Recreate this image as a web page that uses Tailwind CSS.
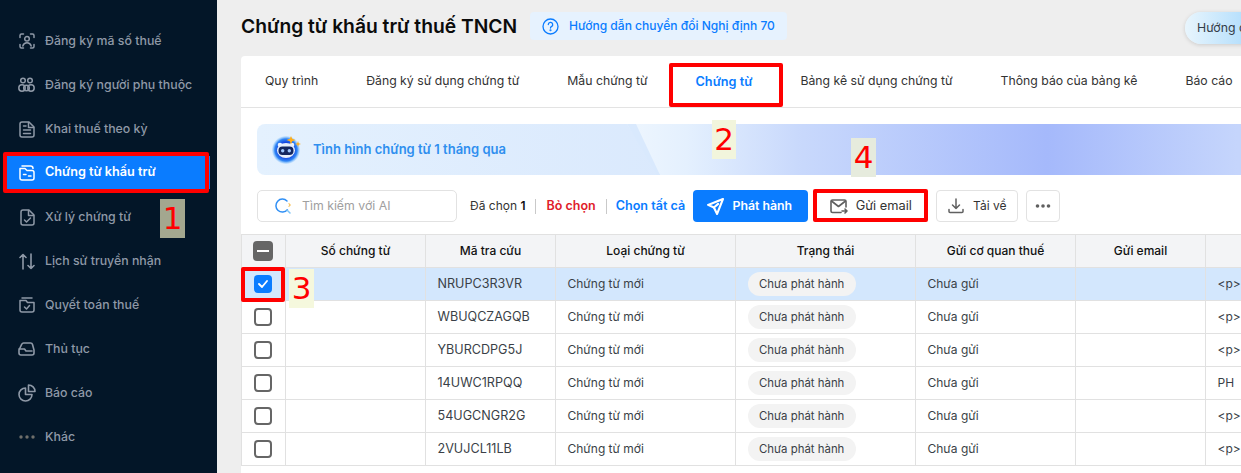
<!DOCTYPE html>
<html lang="vi">
<head>
<meta charset="UTF-8">
<meta name="viewport" content="width=device-width, initial-scale=1.0">
<title>Chứng từ khấu trừ thuế TNCN</title>
<script src="https://cdn.jsdelivr.net/npm/@tailwindcss/browser@4"></script>
</head>
<body class="w-[1241px] h-[473px] overflow-hidden relative bg-[#eeeeee] font-['Inter',sans-serif]">
<div class="flex h-[473px]">

  <!-- sidebar -->
  <aside class="w-[217px] shrink-0 bg-[#031628] pt-[19px] px-[7px] text-[12.35px] font-medium text-[#8f99a7]">
    <nav class="flex flex-col">
      <a class="h-[44px] flex items-center gap-[10px] pl-[12px]">
        <svg class="w-[16px] h-[16px]" viewBox="0 0 16 16" fill="none" stroke="currentColor" stroke-width="1.500" stroke-linecap="round" stroke-linejoin="round"><path d="M1 4.500V2.500A1.500 1.500 0 0 1 2.500 1H4.500M11.500 1H13.500A1.500 1.500 0 0 1 15 2.500V4.500M15 11.500V13.500A1.500 1.500 0 0 1 13.500 15H11.500M4.500 15H2.500A1.500 1.500 0 0 1 1 13.500V11.500"/><circle cx="8" cy="5.800" r="2.300"/><path d="M3.800 13C4.500 10.800 6 9.800 8 9.800S11.500 10.800 12.200 13"/></svg>
        <span>Đăng ký mã số thuế</span>
      </a>
      <a class="h-[44px] flex items-center gap-[10px] pl-[11px]">
        <svg class="w-[17px] h-[16px]" viewBox="0 0 17 16" fill="none" stroke="currentColor" stroke-width="1.500"><circle cx="5" cy="3.500" r="2.300"/><circle cx="12" cy="3.500" r="2.300"/><circle cx="4" cy="11" r="3.200"/><circle cx="13" cy="11" r="3.200"/><circle cx="8.500" cy="11" r="2.800"/></svg>
        <span>Đăng ký người phụ thuộc</span>
      </a>
      <a class="h-[44px] flex items-center gap-[10px] pl-[12px]">
        <svg class="w-[16px] h-[17px]" viewBox="0 0 16 17" fill="none" stroke="currentColor" stroke-width="1.500" stroke-linecap="round" stroke-linejoin="round"><path d="M3 1H10L15 6V14A2 2 0 0 1 13 16H3A2 2 0 0 1 1 14V3A2 2 0 0 1 3 1Z"/><path d="M9.500 1.500V6.500H14.500M4.500 5H7M4.500 9H11.500M4.500 12.500H11.500"/></svg>
        <span>Khai thuế theo kỳ</span>
      </a>
      <a class="h-[33px] mt-[5px] mb-[6px] flex items-center gap-[10px] pl-[12px] bg-[#0a7cff] text-white font-semibold text-[12.65px]">
        <svg class="w-[16px] h-[16px]" viewBox="0 0 16 16" fill="none" stroke="currentColor" stroke-width="1.500" stroke-linecap="round" stroke-linejoin="round"><path d="M3 1H11.500C13 1 14 2 14 3.500"/><path d="M1 3.500V13A2 2 0 0 0 3 15H13A2 2 0 0 0 15 13V7.500A2 2 0 0 0 13 5.500H8L6 3.500H1Z"/><path d="M4.500 9.500H7M9.500 11H12"/></svg>
        <span>Chứng từ khấu trừ</span>
      </a>
      <a class="h-[44px] flex items-center gap-[10px] pl-[13px]">
        <svg class="w-[15px] h-[17px]" viewBox="0 0 15 17" fill="none" stroke="currentColor" stroke-width="1.500" stroke-linecap="round" stroke-linejoin="round"><path d="M3 1H9L14 6V14A2 2 0 0 1 12 16H3A2 2 0 0 1 1 14V3A2 2 0 0 1 3 1Z"/><path d="M8.500 1.500V6.500H13.500M4.500 11L6.500 13L10.500 9"/></svg>
        <span>Xử lý chứng từ</span>
      </a>
      <a class="h-[44px] flex items-center gap-[10px] pl-[12px]">
        <svg class="w-[16px] h-[17px]" viewBox="0 0 16 17" fill="none" stroke="currentColor" stroke-width="1.600" stroke-linecap="round" stroke-linejoin="round"><path d="M4 16V1.500M1 4.500L4 1.500L7 4.500M12 1V15.500M9 12.500L12 15.500L15 12.500"/></svg>
        <span>Lịch sử truyền nhận</span>
      </a>
      <a class="h-[44px] flex items-center gap-[10px] pl-[12px]">
        <svg class="w-[16px] h-[16px]" viewBox="0 0 16 16" fill="none" stroke="currentColor" stroke-width="1.500" stroke-linecap="round" stroke-linejoin="round"><path d="M3 1H13"/><path d="M1 3.500H7L8.500 5.500H15V13A2 2 0 0 1 13 15H3A2 2 0 0 1 1 13V3.500Z"/><path d="M5.500 10L7.500 12L10.500 8.500"/></svg>
        <span>Quyết toán thuế</span>
      </a>
      <a class="h-[44px] flex items-center gap-[10px] pl-[11px]">
        <svg class="w-[17px] h-[14px]" viewBox="0 0 17 14" fill="none" stroke="currentColor" stroke-width="1.600" stroke-linecap="round" stroke-linejoin="round"><path d="M1 8L3.800 2.200A2 2 0 0 1 5.600 1H12.500A2 2 0 0 1 14.500 2.500L16 8V11A2 2 0 0 1 14 13H3A2 2 0 0 1 1 11V8Z"/><path d="M1 7H6.500L8 9H14"/></svg>
        <span>Thủ tục</span>
      </a>
      <a class="h-[44px] flex items-center gap-[9px] pl-[11px]">
        <svg class="w-[18px] h-[18px]" viewBox="0 0 18 18" fill="none" stroke="currentColor" stroke-width="1.600" stroke-linecap="round" stroke-linejoin="round"><path d="M7.500 4A6.500 6.500 0 1 0 14 10.500H7.500V4Z"/><path d="M10.500 1A6.500 6.500 0 0 1 17 7.500H10.500V1Z"/></svg>
        <span>Báo cáo</span>
      </a>
      <a class="h-[44px] flex items-center gap-[10px] pl-[12px]">
        <svg class="w-[16px] h-[4px]" viewBox="0 0 16 4" fill="#6f6f6b"><circle cx="2" cy="2" r="1.700"/><circle cx="8" cy="2" r="1.700"/><circle cx="14" cy="2" r="1.700"/></svg>
        <span>Khác</span>
      </a>
    </nav>
  </aside>

  <!-- main -->
  <main class="flex-1 min-w-0 pl-[24px] overflow-hidden">
    <header class="h-[56px] flex items-center relative">
      <h1 class="text-[19.25px] leading-[26px] font-semibold text-[#0b0b0b] -mt-[4px]">Chứng từ khấu trừ thuế TNCN</h1>
      <a class="ml-[13px] -mt-[4px] h-[28px] w-[257px] pl-[12px] flex items-center gap-[10px] rounded-[4px] bg-[#e6f2fe] text-[12.05px] font-medium text-[#0a7cff] whitespace-nowrap">
        <svg class="w-[17px] h-[17px]" viewBox="0 0 17 17" fill="none" stroke="currentColor" stroke-width="1.300" stroke-linecap="round"><circle cx="8.500" cy="8.500" r="7.500"/><path d="M6.300 6.600A2.200 2.200 0 1 1 9.400 8.600C8.800 8.900 8.500 9.300 8.500 10"/><circle cx="8.500" cy="12.300" r=".4" fill="currentColor"/></svg>
        <span>Hướng dẫn chuyển đổi Nghị định 70</span>
      </a>
      <div class="absolute left-[944px] top-[12px] w-[200px] h-[32px] rounded-full bg-[linear-gradient(90deg,#e8f5fd_0px,#b8e0fc_56px)] shadow-[0_1px_4px_rgba(0,0,0,0.15)] pl-[12px] flex items-center text-[12.3px] text-[#333c48] whitespace-nowrap">Hướng dẫn</div>
    </header>

    <section class="w-[1100px] h-[417px] bg-white rounded-t-[4px]">
      <!-- tabs -->
      <div class="h-[52px] flex items-center border-b border-[#e3e3e3] text-[12.25px] text-[#333333] whitespace-nowrap">
        <a class="px-[24px]">Quy trình</a>
        <a class="px-[24px]">Đăng ký sử dụng chứng từ</a>
        <a class="px-[24px]">Mẫu chứng từ</a>
        <a class="px-[24px] font-semibold text-[#0a7cff] text-[12.7px]">Chứng từ</a>
        <a class="px-[24px]">Bảng kê sử dụng chứng từ</a>
        <a class="px-[24px]">Thông báo của bảng kê</a>
        <a class="px-[24px]">Báo cáo</a>
      </div>

      <!-- banner -->
      <div class="mt-[16px] ml-[16px] h-[51px] rounded-l-[8px] relative overflow-hidden bg-[linear-gradient(90deg,#e4f1fe_0%,#cadcfb_100%)] flex items-center">
        <div class="absolute left-[370px] top-0 w-[614px] h-full bg-[linear-gradient(90deg,#eef6fe_0px,#e4f0fe_60px,#c9d9fc_170px,#a5b9fb_420px,#c5d5fc_610px)] [clip-path:polygon(0_0,100%_0,100%_100%,33px_100%)]"></div>
        <div class="absolute left-[370px] top-0 w-[40px] h-full bg-[#d9e9fd] [clip-path:polygon(0_0,9px_0,33px_100%,30px_100%)]"></div>
        <svg class="relative ml-[15px] w-[30px] h-[30px]" viewBox="0 0 30 30">
          <defs><radialGradient id="orb"><stop offset="0.55" stop-color="#1546e0"/><stop offset="0.8" stop-color="#2f86f5"/><stop offset="1" stop-color="#7fc0fb" stop-opacity="0.2"/></radialGradient></defs>
          <circle cx="14" cy="15" r="14" fill="url(#orb)"/>
          <circle cx="8" cy="10" r="2.300" fill="#eef4ff"/>
          <circle cx="20" cy="10" r="2.300" fill="#eef4ff"/>
          <ellipse cx="14" cy="15.500" rx="9" ry="7.500" fill="#e6eefc"/>
          <rect x="6.500" y="11.500" width="15" height="8.500" rx="4" fill="#14265f"/>
          <circle cx="10.700" cy="15.800" r="1.700" fill="#9ec7ff"/>
          <circle cx="17.300" cy="15.800" r="1.700" fill="#9ec7ff"/>
          <path d="M19 1L20.200 3.800L23.500 5L20.200 6.200L19 9.500L17.800 6.200L14.500 5L17.800 3.800Z" fill="#ffae1a"/>
          <path d="M26 6L26.700 8.300L29 9L26.700 9.700L26 12L25.300 9.700L23 9L25.300 8.300Z" fill="#ffae1a"/>
        </svg>
        <span class="relative ml-[11px] text-[13px] font-semibold text-[#2f8fef]">Tình hình chứng từ 1 tháng qua</span>
      </div>

      <!-- toolbar -->
      <div class="mt-[15px] ml-[16px] h-[32px] flex items-center text-[12.3px] whitespace-nowrap">
        <div class="w-[200px] h-[32px] rounded-[5px] border border-[#e2e2e2] flex items-center pl-[17px] gap-[11px] text-[#a0a0a0]">
          <svg class="w-[16px] h-[16px]" viewBox="0 0 16 16" fill="none" stroke="#2f8ff5" stroke-width="1.500" stroke-linecap="round"><path d="M12 3A6.500 6.500 0 1 0 12.400 11.800"/><path d="M12 12L15 15" stroke="#7fc4f5"/><path d="M14 5.500L14.400 6.600L15.500 7L14.400 7.400L14 8.500" stroke="#f5b942" stroke-width="1"/></svg>
          <span>Tìm kiếm với AI</span>
        </div>
        <span class="ml-[13px] text-[#333333] text-[12px]">Đã chọn <b class="font-semibold text-[#111111]">1</b></span>
        <span class="ml-[10px] w-px h-[15px] bg-[#c9c9c9]"></span>
        <a class="ml-[10px] font-semibold text-[#e0202a] text-[12.5px]">Bỏ chọn</a>
        <span class="ml-[10px] w-px h-[15px] bg-[#c9c9c9]"></span>
        <a class="ml-[9px] font-semibold text-[#0a7cff] text-[12.6px]">Chọn tất cả</a>
        <button class="ml-[8px] w-[115px] h-[32px] rounded-[4px] bg-[#0a7cff] text-white font-semibold flex items-center justify-center gap-[8px] pr-[2px]">
          <svg class="w-[17px] h-[17px]" viewBox="0 0 16 16" fill="none" stroke="currentColor" stroke-width="2" stroke-linejoin="round" stroke-linecap="round"><path d="M15 1L1 6.500L6.500 9L9.500 15L15 1Z"/><path d="M6.500 9L10.500 5.500"/></svg>
          <span>Phát hành</span>
        </button>
        <button class="ml-[9px] w-[107px] h-[32px] rounded-[4px] bg-white text-[#333333] text-[12.8px] flex items-center justify-center gap-[8px]">
          <svg class="w-[18px] h-[15px]" viewBox="0 0 18 15" fill="none" stroke="#606060" stroke-width="1.600" stroke-linecap="round" stroke-linejoin="round"><path d="M11 13.500H2.500A1.500 1.500 0 0 1 1 12V2.500A1.500 1.500 0 0 1 2.500 1H14.500A1.500 1.500 0 0 1 16 2.500V8"/><path d="M1.500 2L8.500 7.500L15.500 2"/><path d="M12 12H17M15 10L17 12L15 14"/></svg>
          <span>Gửi email</span>
        </button>
        <button class="ml-[12px] w-[82px] h-[32px] rounded-[4px] border border-[#e2e2e2] bg-white text-[#333333] text-[12px] flex items-center justify-center gap-[9px]">
          <svg class="w-[16px] h-[16px]" viewBox="0 0 16 16" fill="none" stroke="#606060" stroke-width="1.500" stroke-linecap="round" stroke-linejoin="round"><path d="M8 1V10.500M4.500 7L8 10.500L11.500 7M1 11.500V13.500A1 1 0 0 0 2 14.500H14A1 1 0 0 0 15 13.500V11.500"/></svg>
          <span>Tải về</span>
        </button>
        <button class="ml-[8px] w-[34px] h-[32px] rounded-[4px] border border-[#e2e2e2] bg-white flex items-center justify-center">
          <svg class="w-[16px] h-[4px]" viewBox="0 0 16 4" fill="#606060"><circle cx="2.500" cy="2" r="1.800"/><circle cx="8" cy="2" r="1.800"/><circle cx="13.500" cy="2" r="1.800"/></svg>
        </button>
      </div>

      <!-- table -->
      <table class="mt-[12px] w-[1100px] table-fixed border-collapse text-[12px] text-[#3a3f47] whitespace-nowrap">
        <colgroup>
          <col class="w-[44px]"><col class="w-[140px]"><col class="w-[130px]"><col class="w-[180px]"><col class="w-[180px]"><col class="w-[160px]"><col class="w-[130px]"><col class="w-[136px]">
        </colgroup>
        <thead>
          <tr class="h-[33px] bg-[#f3f4f6] text-[#111111] font-medium [&>th]:font-medium [&>th]:border [&>th]:border-[#e1e1e1]">
            <th><span class="ml-[11px] w-[20px] h-[20px] rounded-[4px] bg-[#666666] flex items-center justify-center"><span class="w-[12px] h-[2px] bg-white"></span></span></th>
            <th>Số chứng từ</th><th>Mã tra cứu</th><th>Loại chứng từ</th><th>Trạng thái</th><th>Gửi cơ quan thuế</th><th>Gửi email</th><th></th>
          </tr>
        </thead>
        <tbody class="[&_td]:border [&_td]:border-[#e1e1e1] [&_td]:px-[11.500px] [&_td:first-child]:px-0">
          <tr class="h-[33px] bg-[#d3e7fd]">
            <td><span class="ml-[12px] w-[18px] h-[18px] rounded-[4px] bg-[#0a7cff] flex items-center justify-center"><svg class="w-[10px] h-[8px]" viewBox="0 0 10 8" fill="none" stroke="white" stroke-width="1.800" stroke-linecap="round" stroke-linejoin="round"><path d="M1 4L4 7L9 1"/></svg></span></td>
            <td></td><td class="text-[12.6px]">NRUPC3R3VR</td><td>Chứng từ mới</td>
            <td><span class="inline-block h-[24px] leading-[24px] px-[11.500px] rounded-full bg-[#f3f3f3] text-[11.4px]">Chưa phát hành</span></td>
            <td>Chưa gửi</td><td></td><td>&lt;p&gt;</td>
          </tr>
          <tr class="h-[33px]">
            <td><span class="block ml-[12px] w-[18px] h-[18px] rounded-[4px] border-2 border-[#666666]"></span></td>
            <td></td><td class="text-[12.6px]">WBUQCZAGQB</td><td>Chứng từ mới</td>
            <td><span class="inline-block h-[24px] leading-[24px] px-[11.500px] rounded-full bg-[#f3f3f3] text-[11.4px]">Chưa phát hành</span></td>
            <td>Chưa gửi</td><td></td><td>&lt;p&gt;</td>
          </tr>
          <tr class="h-[33px]">
            <td><span class="block ml-[12px] w-[18px] h-[18px] rounded-[4px] border-2 border-[#666666]"></span></td>
            <td></td><td class="text-[12.6px]">YBURCDPG5J</td><td>Chứng từ mới</td>
            <td><span class="inline-block h-[24px] leading-[24px] px-[11.500px] rounded-full bg-[#f3f3f3] text-[11.4px]">Chưa phát hành</span></td>
            <td>Chưa gửi</td><td></td><td>&lt;p&gt;</td>
          </tr>
          <tr class="h-[33px]">
            <td><span class="block ml-[12px] w-[18px] h-[18px] rounded-[4px] border-2 border-[#666666]"></span></td>
            <td></td><td class="text-[12.6px]">14UWC1RPQQ</td><td>Chứng từ mới</td>
            <td><span class="inline-block h-[24px] leading-[24px] px-[11.500px] rounded-full bg-[#f3f3f3] text-[11.4px]">Chưa phát hành</span></td>
            <td>Chưa gửi</td><td></td><td>PH</td>
          </tr>
          <tr class="h-[33px]">
            <td><span class="block ml-[12px] w-[18px] h-[18px] rounded-[4px] border-2 border-[#666666]"></span></td>
            <td></td><td class="text-[12.6px]">54UGCNGR2G</td><td>Chứng từ mới</td>
            <td><span class="inline-block h-[24px] leading-[24px] px-[11.500px] rounded-full bg-[#f3f3f3] text-[11.4px]">Chưa phát hành</span></td>
            <td>Chưa gửi</td><td></td><td>&lt;p&gt;</td>
          </tr>
          <tr class="h-[33px]">
            <td><span class="block ml-[12px] w-[18px] h-[18px] rounded-[4px] border-2 border-[#666666]"></span></td>
            <td></td><td class="text-[12.6px]">2VUJCL11LB</td><td>Chứng từ mới</td>
            <td><span class="inline-block h-[24px] leading-[24px] px-[11.500px] rounded-full bg-[#f3f3f3] text-[11.4px]">Chưa phát hành</span></td>
            <td>Chưa gửi</td><td></td><td>&lt;p&gt;</td>
          </tr>
        </tbody>
      </table>
    </section>
  </main>
</div>

<!-- tutorial markup drawn over the screenshot -->
<div class="absolute left-[3px] top-[152px] w-[206px] h-[41px] border-[4px] border-[#ff0000] rounded-[2px]"></div>
<div class="absolute left-[669px] top-[63px] w-[114px] h-[44px] border-[4px] border-[#ff0000] rounded-[2px]"></div>
<div class="absolute left-[813px] top-[189px] w-[115px] h-[33px] border-[4px] border-[#ff0000] rounded-[2px]"></div>
<div class="absolute left-[241px] top-[267px] w-[44px] h-[35px] border-[4px] border-[#ff0000] rounded-[2px]"></div>
<div class="absolute left-[160px] top-[199px] w-[25px] h-[39px] bg-[#a3a78f] text-[#ff0000] text-[31px] leading-[39px] text-center font-['DejaVu_Sans',sans-serif]">1</div>
<div class="absolute left-[712px] top-[120px] w-[24px] h-[39px] bg-[#f2f5dc] text-[#ff0000] text-[31px] leading-[39px] text-center font-['DejaVu_Sans',sans-serif]">2</div>
<div class="absolute left-[289px] top-[269px] w-[25px] h-[39px] bg-[#f5f8dd] text-[#ff0000] text-[31px] leading-[39px] text-center font-['DejaVu_Sans',sans-serif]">3</div>
<div class="absolute left-[851px] top-[138px] w-[25px] h-[39px] bg-[#e6ebdd] text-[#ff0000] text-[31px] leading-[39px] text-center font-['DejaVu_Sans',sans-serif]">4</div>
</body>
</html>
